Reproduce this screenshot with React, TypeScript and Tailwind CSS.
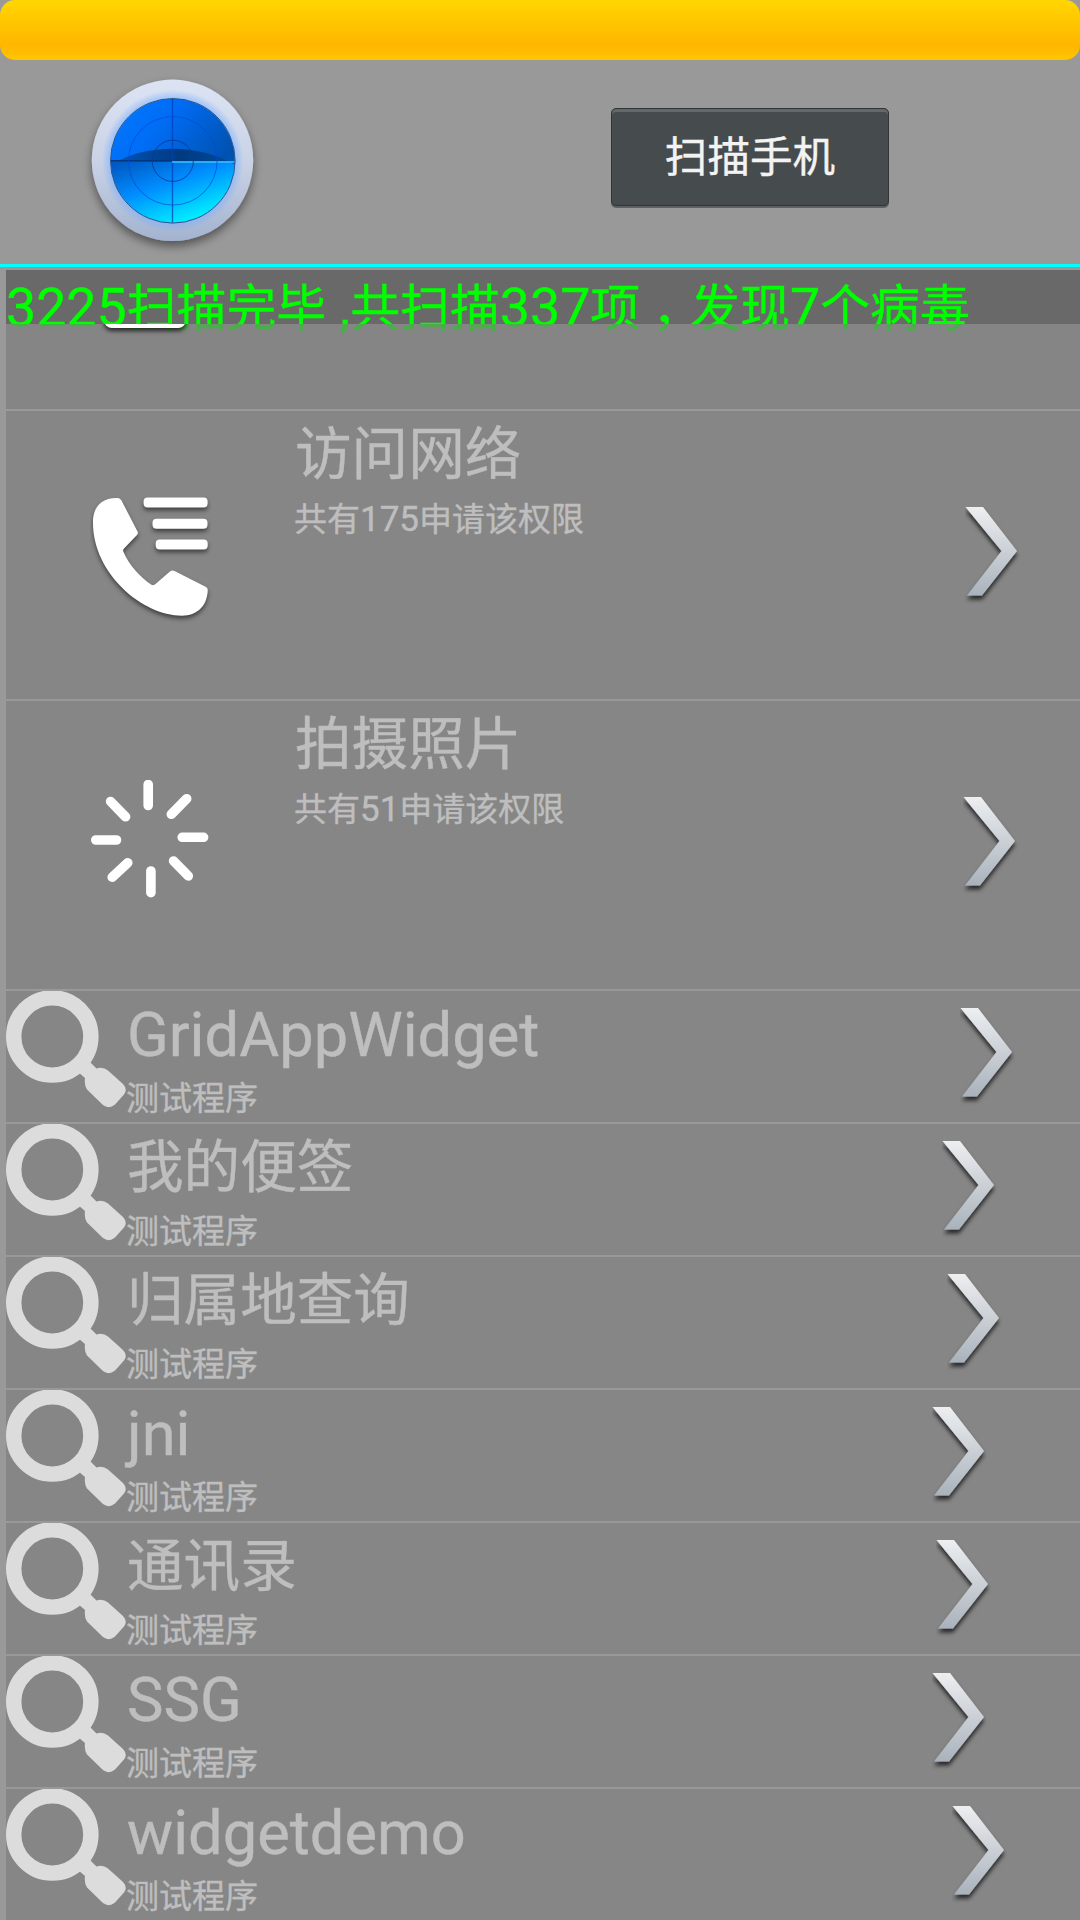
import React from 'react';
import clsx from 'clsx';

interface PermissionItem {
  icon: 'phone' | 'spinner';
  title: string;
  count: number;
  arrowMargin: string;
}

interface AppItem {
  name: string;
  latin?: boolean;
  arrowMargin: string;
}

const permissions: PermissionItem[] = [
  { icon: 'phone', title: '访问网络', count: 175, arrowMargin: 'mr-[60px]' },
  { icon: 'spinner', title: '拍摄照片', count: 51, arrowMargin: 'mr-[62px]' },
];

const apps: AppItem[] = [
  { name: 'GridAppWidget', latin: true, arrowMargin: 'mr-[65px]' },
  { name: '我的便签', arrowMargin: 'mr-[83px]' },
  { name: '归属地查询', arrowMargin: 'mr-[78px]' },
  { name: 'jni', latin: true, arrowMargin: 'mr-[93px]' },
  { name: '通讯录', arrowMargin: 'mr-[89px]' },
  { name: 'SSG', latin: true, arrowMargin: 'mr-[93px]' },
  { name: 'widgetdemo', latin: true, arrowMargin: 'mr-[73px]' },
];

const RadarIcon: React.FC = () => (
  <svg className="ml-[80px] mt-[8px] block h-[190px] w-[190px] shrink-0" viewBox="0 0 190 190">
    <defs>
      <linearGradient id="rim" x1="0" y1="0" x2="0" y2="1">
        <stop offset="0" stopColor="#dce4f4" />
        <stop offset="0.5" stopColor="#cad3e6" />
        <stop offset="1" stopColor="#a3b3cf" />
      </linearGradient>
      <linearGradient id="sky" x1="0" y1="0.3" x2="1" y2="0.7">
        <stop offset="0" stopColor="#0078ff" />
        <stop offset="0.4" stopColor="#006cf4" />
        <stop offset="1" stopColor="#0052b0" />
      </linearGradient>
      <linearGradient id="sea" x1="0.1" y1="0" x2="0.7" y2="0.9">
        <stop offset="0" stopColor="#0058c0" />
        <stop offset="0.45" stopColor="#008cff" />
        <stop offset="1" stopColor="#00f0ff" />
      </linearGradient>
      <linearGradient id="wave" x1="0" y1="0" x2="1" y2="0">
        <stop offset="0" stopColor="#0058c0" />
        <stop offset="0.55" stopColor="#003a80" />
        <stop offset="1" stopColor="#004c9c" />
      </linearGradient>
      <radialGradient id="glow">
        <stop offset="0.85" stopColor="#7aaeff" />
        <stop offset="1" stopColor="#7aaeff" stopOpacity="0" />
      </radialGradient>
      <filter id="radarShadow" x="-20%" y="-20%" width="140%" height="150%">
        <feDropShadow dx="0" dy="5" stdDeviation="5" floodColor="#000" floodOpacity="0.45" />
      </filter>
      <clipPath id="dial">
        <circle cx="92.8" cy="92.8" r="62" />
      </clipPath>
    </defs>
    <circle cx="92.5" cy="92.3" r="80.7" fill="url(#rim)" filter="url(#radarShadow)" />
    <circle cx="92.8" cy="92.8" r="71" fill="url(#glow)" opacity="0.7" />
    <g clipPath="url(#dial)">
      <rect x="30" y="30" width="126" height="64" fill="url(#sky)" />
      <rect x="30" y="93" width="126" height="63" fill="url(#sea)" />
      <path d="M30 97 C66 76 116 75 156 97 L156 93.5 L30 93.5Z" fill="url(#wave)" />
      <path d="M30 93 H44 L30 97Z" fill="#0058c0" />
      <path d="M92.5 30 V156" stroke="#0040b8" strokeWidth="1.4" opacity="0.75" />
      <path d="M30 92.8 H92" stroke="#00367c" strokeWidth="1.4" />
      <path d="M92 94 H156" stroke="#38c4ff" strokeWidth="1.6" />
    </g>
    <circle cx="92.8" cy="92.8" r="44.3" fill="none" stroke="#0048e0" strokeWidth="1" opacity="0.7" />
    <circle cx="92.8" cy="92.8" r="20.6" fill="none" stroke="#003c90" strokeWidth="1" opacity="0.85" />
    <circle cx="92.8" cy="92.8" r="62.3" fill="none" stroke="#27568c" strokeWidth="1" />
  </svg>
);

const Arrow: React.FC<{ className: string }> = ({ className }) => (
  <svg className={clsx('block h-[98px] w-[55px] shrink-0', className)} viewBox="0 0 55 98">
    <defs>
      <linearGradient id="steel" x1="0" y1="0" x2="0" y2="1">
        <stop offset="0" stopColor="#edeff1" />
        <stop offset="0.5" stopColor="#cbd0d6" />
        <stop offset="1" stopColor="#a9b2bc" />
      </linearGradient>
      <filter id="arrowShadow" x="-20%" y="-10%" width="140%" height="125%">
        <feDropShadow dx="0" dy="4" stdDeviation="1.9" floodColor="#000" floodOpacity="0.7" />
      </filter>
    </defs>
    <path d="M0.5 0 H18 L52 44 L17 88.5 H2 L36.5 44Z" fill="url(#steel)" filter="url(#arrowShadow)" />
  </svg>
);

const PhoneIcon: React.FC = () => (
  <svg className="ml-[84px] mt-[79px] block h-[135px] w-[122px]" viewBox="0 0 122 135">
    <g fill="#fff" className="drop-shadow-[0_3px_2px_rgba(0,0,0,0.5)]">
      <path d="M28 8 Q30 8 31.5 10.5 L47.5 41.5 Q48.5 43.5 47 45 L34 58.5 Q32.5 60 33.5 62 C39 75 50 87 61 94.5 Q63.5 96 65.5 94 L80.5 81 Q82.5 79.8 84.5 81 L116 97 Q118 98.2 117.7 101 C117 116 107 125.7 92 125.7 C52 125.7 3 83 3 33 C3 17 11 7.5 28 8Z" />
      <rect x="53.6" y="7.5" width="64" height="10" rx="4" />
      <rect x="62.5" y="28.7" width="55" height="10" rx="4" />
      <rect x="65.7" y="49.5" width="52" height="10" rx="4" />
    </g>
  </svg>
);

const SpinnerIcon: React.FC = () => (
  <svg className="ml-[84px] mt-[79px] block h-[120px] w-[122px]" viewBox="90 780 122 120">
    <path
      d="M148.2 784.5V805.5 M186.7 798.7L171.3 814.3 M182.2 837.3H203.6 M173.6 861L188.3 876 M150.9 871V892.7 M127.8 862.7L112.2 877.3 M95.8 840H116.5 M110.6 801.5L125.6 816.8"
      stroke="#fff"
      strokeWidth="9.6"
      strokeLinecap="round"
      fill="none"
    />
  </svg>
);

const SearchIcon: React.FC = () => (
  <svg className="block h-[120px] w-[120px] shrink-0" viewBox="0 0 120 120">
    <circle cx="46.3" cy="45.5" r="38.6" fill="none" stroke="#dcdcdc" strokeWidth="15.4" />
    <path
      d="M83 70 L90.5 77.5 Q97 75.5 102 79.5 L117 93 Q122 98.5 118 103.5 L109 113.5 Q103 118.5 97 114 L81 98.5 Q78 94 79 87 L72 81Z"
      fill="#dcdcdc"
    />
  </svg>
);

const PermissionRow: React.FC<{ item: PermissionItem }> = ({ item }) => (
  <li className="flex h-[290px] items-start border-b-2 border-[#999] bg-[#868686]">
    <div className="w-[289px] shrink-0">{item.icon === 'phone' ? <PhoneIcon /> : <SpinnerIcon />}</div>
    <div className="flex-1 text-[#bebebe]">
      <h2 className="h-[88px] pt-[4px] text-[56.6px] leading-[80px]">{item.title}</h2>
      <p className="-ml-[1px] pt-[1px] text-[33px] leading-[40px]">
        共有<span className="text-[35px]">{item.count}</span>申请该权限
      </p>
    </div>
    <Arrow className={clsx('mt-[96px]', item.arrowMargin)} />
  </li>
);

const AppRow: React.FC<{ item: AppItem }> = ({ item }) => (
  <li className="flex h-[133px] items-start border-b-2 border-[#999] bg-[#868686]">
    <SearchIcon />
    <div className="flex-1 pl-[1px] text-[#bebebe]">
      <h2 className={clsx('h-[88px] pt-[4px] leading-[80px]', item.latin ? 'text-[61.4px]' : 'text-[56.6px]')}>
        {item.name}
      </h2>
      <p className="-ml-[1px] text-[33px] leading-[40px]">测试程序</p>
    </div>
    <Arrow className={clsx('mt-[17px]', item.arrowMargin)} />
  </li>
);

export default function App() {
  return (
    <div className="flex h-[1920px] w-[1080px] flex-col overflow-hidden bg-[#999] font-['Roboto','Noto_Sans_CJK_SC',sans-serif] [-webkit-text-stroke:0.4px]">
      <div className="h-[60px] shrink-0 rounded-[15px] bg-linear-to-b from-[#ffd600] via-[#ffb600] via-75% to-[#ffc600]" />

      <header className="flex h-[207px] shrink-0 items-start border-b-[3px] border-[#0ff]">
        <RadarIcon />
        <button className="ml-[341px] mt-[48px] h-[98px] w-[278px] rounded-[5px] border border-[#303436] bg-[#464b4e] pt-[2px] text-[42.6px] text-[#f3f3f3] shadow-[inset_0_3px_0_#63686b,0_2px_0_#606060]">
          扫描手机
        </button>
      </header>

      <main className="mt-[3px] flex-1 pl-[6px]">
        <div className="h-[54px] bg-[#696969] pt-[3px] whitespace-nowrap text-[49.9px] leading-[70px] text-[#0f0]">
          <span className="text-[53.7px]">3225</span>扫描完毕<span className="text-[53.7px]"> ,</span>共扫描
          <span className="text-[53.7px]">337</span>项
          <span className="mr-[13px] ml-[12px] [font-feature-settings:'halt']">，</span>发现
          <span className="text-[53.7px]">7</span>个病毒
        </div>
        {/* row scrolled half under the status line, the text shows through it */}
        <div className="relative flex h-[87px] items-start overflow-hidden border-b-2 border-[#999] bg-[#787878]/60">
          <div className="-mt-[12px] ml-[98px] h-[16px] w-[82px] rounded-[12px] bg-white shadow-[0_3px_4px_rgba(0,0,0,0.7)]" />
        </div>
        <ul>
          {permissions.map(item => (
            <PermissionRow key={item.title} item={item} />
          ))}
          {apps.map(item => (
            <AppRow key={item.name} item={item} />
          ))}
        </ul>
      </main>
    </div>
  );
}
